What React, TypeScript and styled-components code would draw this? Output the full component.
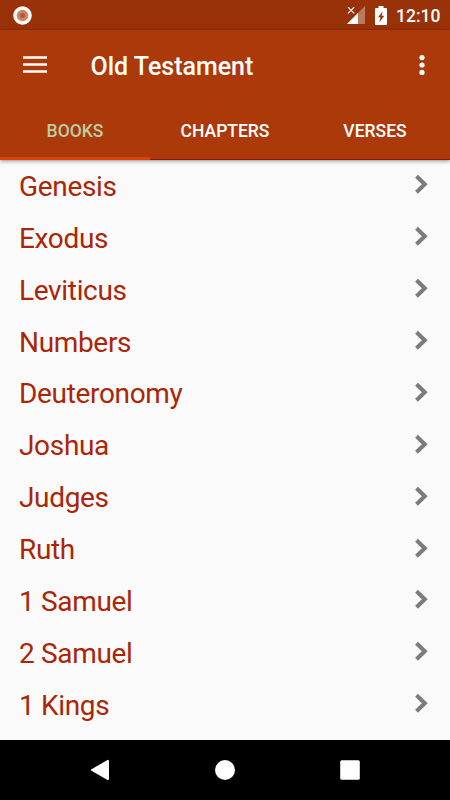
import React from "react";
import styled, { createGlobalStyle } from "styled-components";

const GlobalStyle = createGlobalStyle`
  * { box-sizing: border-box; }
  body { margin: 0; background: #fafafa; font-family: Roboto, sans-serif; }
  button { border: 0; padding: 0; background: none; font: inherit; color: inherit; }
  svg { display: block; }
`;

const Screen = styled.div`
  width: 450px;
  height: 800px;
  display: flex;
  flex-direction: column;
  overflow: hidden;
  background: #fafafa;
`;

const StatusBar = styled.div`
  flex: none;
  height: 30px;
  display: flex;
  align-items: center;
  padding: 0 10px 0 13px;
  background: #993209;
  color: #fff;
`;

const StatusIcons = styled.div`
  margin-left: auto;
  display: flex;
  align-items: center;
`;

const BatteryGap = styled.span`
  margin-left: 10px;
`;

const Clock = styled.span`
  width: 44px;
  margin-left: 9px;
  font-size: 17.5px;
  line-height: 30px;
  font-weight: 500;
  white-space: nowrap;
  padding-top: 1px;
`;

const Header = styled.header`
  flex: none;
  height: 130px;
  position: relative;
  background: #ac390a;
  color: #fff;
  box-shadow: 0 1px 4px rgba(0, 0, 0, 0.45);
`;

const Toolbar = styled.div`
  height: 70px;
  display: flex;
  align-items: center;
  padding: 0 25px 0 23px;
`;

const Title = styled.h1`
  flex: 1;
  margin: 3px 0 0 43.5px;
  font-size: 25px;
  line-height: 30px;
  font-weight: 500;
`;

const IconButton = styled.button`
  display: flex;
`;

const Tabs = styled.nav`
  height: 60px;
  display: grid;
  grid-template-columns: repeat(3, 1fr);
  border-bottom: 1px solid #9c1204;
`;

const Tab = styled.button<{ $active?: boolean }>`
  height: 60px;
  padding-top: 4px;
  font-size: 17.5px;
  font-weight: 500;
  color: ${(p) => (p.$active ? "#bccea4" : "#fff")};
  border-bottom: 3px solid ${(p) => (p.$active ? "#d84309" : "transparent")};
`;

const BookList = styled.ul`
  flex: 1;
  min-height: 0;
  margin: 0;
  padding: 0;
  list-style: none;
  overflow: hidden;
`;

const BookRow = styled.li`
  height: 51.875px;
  display: flex;
  align-items: center;
  justify-content: space-between;
  padding: 0 21px 0 19px;
`;

const BookName = styled.span`
  padding-top: 2px;
  font-size: 28px;
  line-height: 40px;
  letter-spacing: -0.33px;
  color: #ab2506;
`;

const ChevronBox = styled.span`
  margin-bottom: 3px;
`;

const NavBar = styled.div`
  flex: none;
  height: 60px;
  display: grid;
  grid-template-columns: repeat(3, 125px);
  justify-content: center;
  align-items: center;
  justify-items: center;
  background: #000;
`;

const books = [
  "Genesis", "Exodus", "Leviticus", "Numbers", "Deuteronomy", "Joshua",
  "Judges", "Ruth", "1 Samuel", "2 Samuel", "1 Kings",
];

const RecordIcon = () => (
  <svg width="19" height="19" viewBox="0 0 19 19">
    <circle cx="9.5" cy="9.5" r="9.3" fill="#fff" />
    <circle cx="9.5" cy="9.5" r="5.8" fill="#cc8464" />
    <circle cx="9.5" cy="9.5" r="2.5" fill="#b35b37" />
  </svg>
);

const SignalIcon = () => (
  <svg width="18" height="18" viewBox="0 0 18 18">
    <path d="M18 0V18H0Z" fill="#fff" opacity=".35" />
    <path d="M11 7V18H0Z" fill="#fff" />
    <path d="M.6 .2H8V8H.6Z" fill="#993209" />
    <path d="M1 1.2 7.2 7.4M7.2 1.2 1 7.4" stroke="#fff" strokeWidth="1.2" />
  </svg>
);

const BatteryIcon = () => (
  <svg width="12" height="19" viewBox="0 0 12 19">
    <path d="M3.5 0h5v2H11a1 1 0 0 1 1 1v15a1 1 0 0 1-1 1H1a1 1 0 0 1-1-1V3a1 1 0 0 1 1-1h2.5Z" fill="#fff" />
    <path d="M7.8 5.2 3 11.2H5.5L4.2 16.6 9.3 9.8H6.6Z" fill="#993209" />
  </svg>
);

const MenuIcon = () => (
  <svg width="24" height="18" viewBox="0 0 24 18">
    <path d="M0 1.5H24M0 8.5H24M0 15.5H24" stroke="#fff" strokeWidth="2.7" />
  </svg>
);

const MoreIcon = () => (
  <svg width="6" height="22" viewBox="0 0 6 22" fill="#fff">
    <circle cx="3" cy="3.6" r="2.6" />
    <circle cx="3" cy="11" r="2.6" />
    <circle cx="3" cy="18.4" r="2.6" />
  </svg>
);

const Chevron = () => (
  <svg width="15" height="22" viewBox="0 0 15 22">
    <path d="M2.5 3.2 10.8 11.2 2.5 19.2" fill="none" stroke="#7c7c7c" strokeWidth="4" />
  </svg>
);

export default function App() {
  return (
    <>
      <GlobalStyle />
      <Screen>
        <StatusBar>
          <RecordIcon />
          <StatusIcons>
            <SignalIcon />
            <BatteryGap><BatteryIcon /></BatteryGap>
            <Clock>12:10</Clock>
          </StatusIcons>
        </StatusBar>
        <Header>
          <Toolbar>
            <IconButton aria-label="Menu"><MenuIcon /></IconButton>
            <Title>Old Testament</Title>
            <IconButton aria-label="More options"><MoreIcon /></IconButton>
          </Toolbar>
          <Tabs>
            <Tab $active>BOOKS</Tab>
            <Tab>CHAPTERS</Tab>
            <Tab>VERSES</Tab>
          </Tabs>
        </Header>
        <BookList>
          {books.map((name) => (
            <BookRow key={name}>
              <BookName>{name}</BookName>
              <ChevronBox><Chevron /></ChevronBox>
            </BookRow>
          ))}
        </BookList>
        <NavBar>
          <svg width="20" height="22" viewBox="0 0 20 22">
            <path d="M2 11 18 1.9V20.1Z" fill="#fff" stroke="#fff" strokeWidth="2" strokeLinejoin="round" />
          </svg>
          <svg width="20" height="20" viewBox="0 0 20 20">
            <circle cx="10" cy="10" r="10" fill="#fff" />
          </svg>
          <svg width="20" height="20" viewBox="0 0 20 20">
            <rect x=".2" y=".2" width="19.6" height="19.6" rx="1.5" fill="#fff" />
          </svg>
        </NavBar>
      </Screen>
    </>
  );
}
